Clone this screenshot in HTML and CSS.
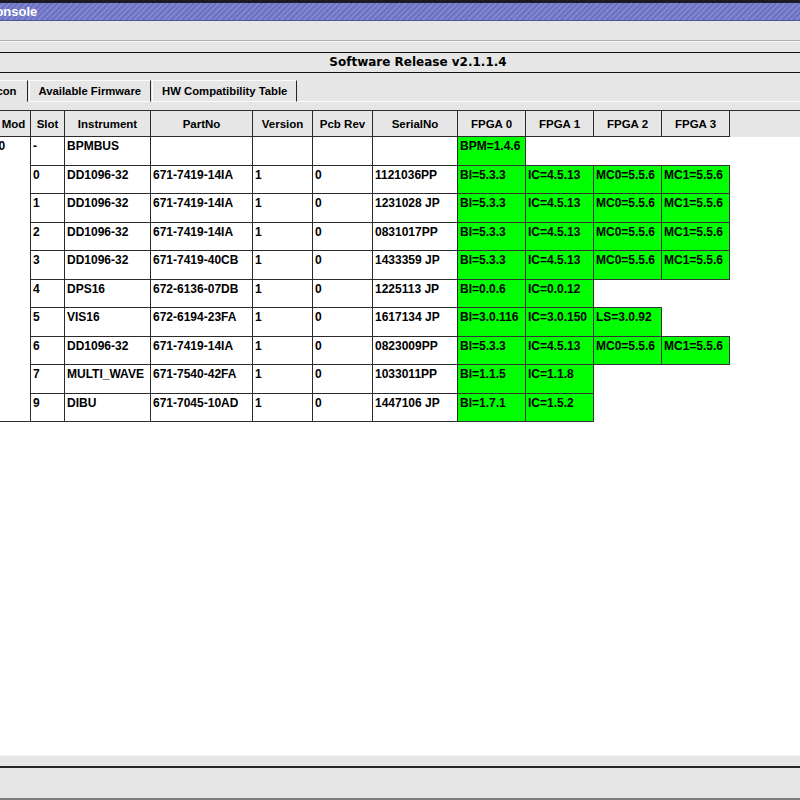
FILE: index.html
```html
<!DOCTYPE html>
<html lang="en">
<head>
    <meta charset="UTF-8">
    <meta name="viewport" content="width=device-width, initial-scale=1.0">
    <title>Console</title>
    <link rel="stylesheet" href="styles.css">
</head>
<body>

    <div class="window">
        <div class="titlebar"><span class="title">Console</span></div>
        <div class="menubar"></div>
        <div class="gap"></div>

        <div class="release">Software Release v2.1.1.4</div>

        <div class="tabs">
            <div class="tab active">Recon</div>
            <div class="tab">Available Firmware</div>
            <div class="tab">HW Compatibility Table</div>
            <div class="tab-rest"></div>
        </div>

        <div class="sheet">
            <div class="sheet-top"></div>
            <table class="modules">
                <colgroup>
                    <col style="width:34px">
                    <col style="width:34px">
                    <col style="width:86px">
                    <col style="width:102px">
                    <col style="width:60px">
                    <col style="width:60px">
                    <col style="width:85px">
                    <col style="width:68px">
                    <col style="width:68px">
                    <col style="width:68px">
                    <col style="width:68px">
                    <col>
                </colgroup>
                <thead>
                    <tr>
                        <th>Mod</th>
                        <th>Slot</th>
                        <th>Instrument</th>
                        <th>PartNo</th>
                        <th>Version</th>
                        <th>Pcb Rev</th>
                        <th>SerialNo</th>
                        <th>FPGA 0</th>
                        <th>FPGA 1</th>
                        <th>FPGA 2</th>
                        <th>FPGA 3</th>
                        <th class="fill"></th>
                    </tr>
                </thead>
                <tbody>
                    <tr>
                        <td class="mod" rowspan="10">0</td>
                        <td>-</td>
                        <td>BPMBUS</td>
                        <td></td>
                        <td></td>
                        <td></td>
                        <td></td>
                        <td class="fw">BPM=1.4.6</td>
                        <td class="blank"></td>
                        <td class="blank"></td>
                        <td class="blank"></td>
                        <td class="fill"></td>
                    </tr>
                    <tr>
                        <td>0</td>
                        <td>DD1096-32</td>
                        <td>671-7419-14IA</td>
                        <td>1</td>
                        <td>0</td>
                        <td>1121036PP</td>
                        <td class="fw">BI=5.3.3</td>
                        <td class="fw">IC=4.5.13</td>
                        <td class="fw">MC0=5.5.6</td>
                        <td class="fw">MC1=5.5.6</td>
                        <td class="fill"></td>
                    </tr>
                    <tr>
                        <td>1</td>
                        <td>DD1096-32</td>
                        <td>671-7419-14IA</td>
                        <td>1</td>
                        <td>0</td>
                        <td>1231028 JP</td>
                        <td class="fw">BI=5.3.3</td>
                        <td class="fw">IC=4.5.13</td>
                        <td class="fw">MC0=5.5.6</td>
                        <td class="fw">MC1=5.5.6</td>
                        <td class="fill"></td>
                    </tr>
                    <tr>
                        <td>2</td>
                        <td>DD1096-32</td>
                        <td>671-7419-14IA</td>
                        <td>1</td>
                        <td>0</td>
                        <td>0831017PP</td>
                        <td class="fw">BI=5.3.3</td>
                        <td class="fw">IC=4.5.13</td>
                        <td class="fw">MC0=5.5.6</td>
                        <td class="fw">MC1=5.5.6</td>
                        <td class="fill"></td>
                    </tr>
                    <tr>
                        <td>3</td>
                        <td>DD1096-32</td>
                        <td>671-7419-40CB</td>
                        <td>1</td>
                        <td>0</td>
                        <td>1433359 JP</td>
                        <td class="fw">BI=5.3.3</td>
                        <td class="fw">IC=4.5.13</td>
                        <td class="fw">MC0=5.5.6</td>
                        <td class="fw">MC1=5.5.6</td>
                        <td class="fill"></td>
                    </tr>
                    <tr>
                        <td>4</td>
                        <td>DPS16</td>
                        <td>672-6136-07DB</td>
                        <td>1</td>
                        <td>0</td>
                        <td>1225113 JP</td>
                        <td class="fw">BI=0.0.6</td>
                        <td class="fw">IC=0.0.12</td>
                        <td class="blank"></td>
                        <td class="blank"></td>
                        <td class="fill"></td>
                    </tr>
                    <tr>
                        <td>5</td>
                        <td>VIS16</td>
                        <td>672-6194-23FA</td>
                        <td>1</td>
                        <td>0</td>
                        <td>1617134 JP</td>
                        <td class="fw">BI=3.0.116</td>
                        <td class="fw">IC=3.0.150</td>
                        <td class="fw">LS=3.0.92</td>
                        <td class="blank"></td>
                        <td class="fill"></td>
                    </tr>
                    <tr>
                        <td>6</td>
                        <td>DD1096-32</td>
                        <td>671-7419-14IA</td>
                        <td>1</td>
                        <td>0</td>
                        <td>0823009PP</td>
                        <td class="fw">BI=5.3.3</td>
                        <td class="fw">IC=4.5.13</td>
                        <td class="fw">MC0=5.5.6</td>
                        <td class="fw">MC1=5.5.6</td>
                        <td class="fill"></td>
                    </tr>
                    <tr>
                        <td>7</td>
                        <td>MULTI_WAVE</td>
                        <td>671-7540-42FA</td>
                        <td>1</td>
                        <td>0</td>
                        <td>1033011PP</td>
                        <td class="fw">BI=1.1.5</td>
                        <td class="fw">IC=1.1.8</td>
                        <td class="blank"></td>
                        <td class="blank"></td>
                        <td class="fill"></td>
                    </tr>
                    <tr>
                        <td>9</td>
                        <td>DIBU</td>
                        <td>671-7045-10AD</td>
                        <td>1</td>
                        <td>0</td>
                        <td>1447106 JP</td>
                        <td class="fw">BI=1.7.1</td>
                        <td class="fw">IC=1.5.2</td>
                        <td class="blank"></td>
                        <td class="blank"></td>
                        <td class="fill"></td>
                    </tr>
                </tbody>
            </table>
        </div>

        <div class="statusbar">
            <div class="status-top"></div>
            <div class="status-main"></div>
        </div>
    </div>

</body>
</html>
```

FILE: styles.css
```css
body {
    margin: 0;
    overflow: hidden;
    font-family: "Liberation Sans", Arial, sans-serif;
    background-color: #fff;
    color: #000;
}
.window {
    display: flex;
    flex-direction: column;
    height: 100vh;
}

/* window decoration */
.titlebar {
    height: 17px;
    border-top: 3px solid #1c1c20;
    border-bottom: 1px solid #50549a;
    background: repeating-linear-gradient(135deg, #6c71c2 0 2px, #8085d0 2px 4px);
    color: #fff;
    font-size: 13px;
    font-weight: bold;
    line-height: 18px;
    white-space: nowrap;
    overflow: hidden;
    text-indent: -14px;
}
.menubar {
    height: 19px;
    background-color: #e6e6e6;
    border-bottom: 1px solid #adadad;
}
.gap {
    height: 10px;
    border-top: 1px solid #fafafa;
    background-color: #e6e6e6;
}
.release {
    height: 19px;
    border-top: 1px solid #141414;
    border-bottom: 1px solid #141414;
    background-color: #e6e6e6;
    padding-left: 36px;
    text-align: center;
    font-family: "DejaVu Sans", sans-serif;
    font-size: 12px;
    font-weight: bold;
    line-height: 19px;
}

/* tab strip */
.tabs {
    display: flex;
    padding-top: 7px;
    margin-left: -29px;
    background-color: #e6e6e6;
}
.tab {
    padding: 0 9px;
    line-height: 20px;
    font-size: 11.3px;
    font-weight: bold;
    white-space: nowrap;
    border-top: 1px solid #fbfbfb;
    border-left: 1px solid #fbfbfb;
    border-right: 1px solid #262626;
    border-bottom: 1px solid #fbfbfb;
}
.tab + .tab {
    margin-left: 1px;
}
.tab.active {
    padding: 0 10px;
    border-bottom-color: #e6e6e6;
}
.tab-rest {
    flex: 1;
    border-bottom: 1px solid #fbfbfb;
}

/* module table */
.sheet {
    flex: 1;
    background-color: #fff;
}
.sheet-top {
    height: 8px;
    background-color: #e6e6e6;
}
.modules {
    width: 804px;
    margin-left: -4px;
    table-layout: fixed;
    border-collapse: collapse;
}
.modules th {
    height: 24px;
    padding: 1px 0 0;
    background-color: #e6e6e6;
    border: 1px solid #2b2b2b;
    font-size: 11.5px;
    font-weight: bold;
    text-align: center;
}
.modules th.fill {
    border-bottom: none;
    border-right: none;
}
.modules tbody tr {
    height: 28.5px;
}
.modules td {
    padding: 2px 2px 0;
    border: 1px solid #2b2b2b;
    vertical-align: top;
    font-size: 12px;
    font-weight: bold;
    line-height: 14px;
    white-space: nowrap;
    overflow: hidden;
}
.modules td.mod {
    border-left: none;
}
.modules td.fw {
    background-color: #00ff00;
    border-color: #333;
}
.modules td.blank, .modules td.fill {
    border: none;
}

/* bottom status area */
.statusbar {
    border-top: 1px solid #f5f5f5;
    background-color: #e6e6e6;
}
.status-top {
    height: 10px;
}
.status-main {
    height: 30px;
    border-top: 2px solid #262626;
    border-bottom: 2px solid #7c7c7c;
}
```
